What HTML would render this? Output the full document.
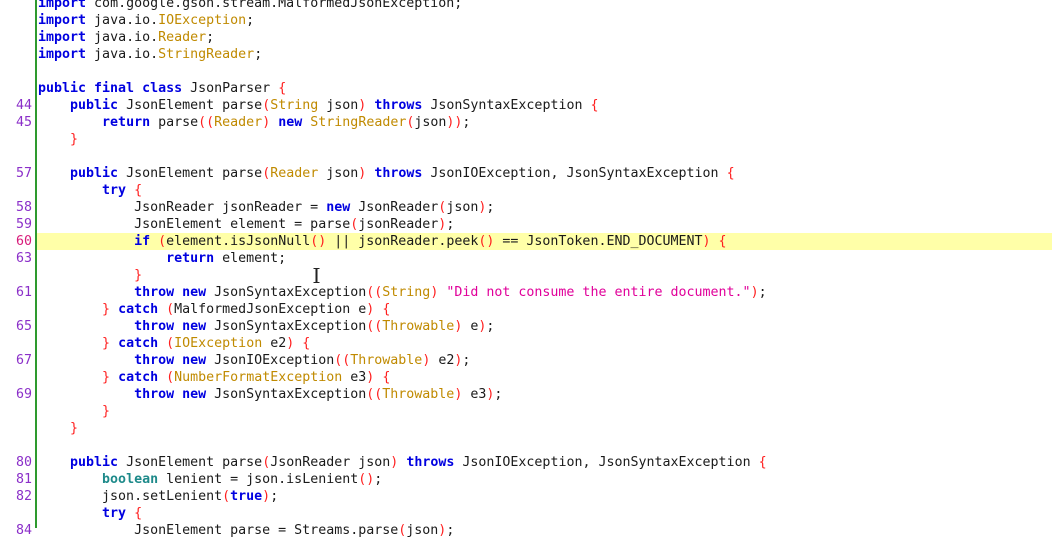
<!DOCTYPE html>
<html><head><style>
body{margin:0;background:#fff;width:1052px;height:528px;overflow:hidden;position:relative;font-family:"DejaVu Sans Mono","Liberation Mono",monospace;font-size:13.3px;color:#1a1a1a}
#g{position:absolute;left:35px;top:0;width:2px;height:528px;background:#2e9a2e;z-index:2}
#c{position:absolute;top:-5px;left:0;right:0}
.l{height:17px;line-height:17px;white-space:pre;position:relative}
.n{position:absolute;left:0;width:32px;text-align:right;color:#8b2fc9}
.t{position:absolute;left:38px}
.h{background:#ffffa8;margin-left:37px}
.h .n{left:-37px;color:#d81b7a}.h .t{left:1px}
b{color:#0000e0}
.q{color:#1e8a8a;font-weight:bold}
i{font-style:normal;color:#ff1e1e}
u{text-decoration:none;color:#c08a00}
s{text-decoration:none;color:#e0009a}
</style></head><body>
<div id="g"></div>
<svg style="position:absolute;left:312px;top:267px" width="9" height="18"><path d="M1.5 1.5h2.5v14h-2.5M7.5 1.5h-2.5v14h2.5" stroke="#222" stroke-width="1" fill="none"/></svg>
<div id="c">
<div class="l"><span class="t"><b>import</b> com.google.gson.stream.MalformedJsonException;</span></div>
<div class="l"><span class="t"><b>import</b> java.io.<u>IOException</u>;</span></div>
<div class="l"><span class="t"><b>import</b> java.io.<u>Reader</u>;</span></div>
<div class="l"><span class="t"><b>import</b> java.io.<u>StringReader</u>;</span></div>
<div class="l"></div>
<div class="l"><span class="t"><b>public final class</b> JsonParser <i>{</i></span></div>
<div class="l"><span class="n">44</span><span class="t">    <b>public</b> JsonElement parse<i>(</i><u>String</u> json<i>)</i> <b>throws</b> JsonSyntaxException <i>{</i></span></div>
<div class="l"><span class="n">45</span><span class="t">        <b>return</b> parse<i>((</i><u>Reader</u><i>)</i> <b>new</b> <u>StringReader</u><i>(</i>json<i>))</i>;</span></div>
<div class="l"><span class="t">    <i>}</i></span></div>
<div class="l"></div>
<div class="l"><span class="n">57</span><span class="t">    <b>public</b> JsonElement parse<i>(</i><u>Reader</u> json<i>)</i> <b>throws</b> JsonIOException, JsonSyntaxException <i>{</i></span></div>
<div class="l"><span class="t">        <b>try</b> <i>{</i></span></div>
<div class="l"><span class="n">58</span><span class="t">            JsonReader jsonReader = <b>new</b> JsonReader<i>(</i>json<i>)</i>;</span></div>
<div class="l"><span class="n">59</span><span class="t">            JsonElement element = parse<i>(</i>jsonReader<i>)</i>;</span></div>
<div class="l h"><span class="n">60</span><span class="t">            <b>if</b> <i>(</i>element.isJsonNull<i>()</i> || jsonReader.peek<i>()</i> == JsonToken.END_DOCUMENT<i>)</i> <i>{</i></span></div>
<div class="l"><span class="n">63</span><span class="t">                <b>return</b> element;</span></div>
<div class="l"><span class="t">            <i>}</i></span></div>
<div class="l"><span class="n">61</span><span class="t">            <b>throw new</b> JsonSyntaxException<i>((</i><u>String</u><i>)</i> <s>"Did not consume the entire document."</s><i>)</i>;</span></div>
<div class="l"><span class="t">        <i>}</i> <b>catch</b> <i>(</i>MalformedJsonException e<i>)</i> <i>{</i></span></div>
<div class="l"><span class="n">65</span><span class="t">            <b>throw new</b> JsonSyntaxException<i>((</i><u>Throwable</u><i>)</i> e<i>)</i>;</span></div>
<div class="l"><span class="t">        <i>}</i> <b>catch</b> <i>(</i><u>IOException</u> e2<i>)</i> <i>{</i></span></div>
<div class="l"><span class="n">67</span><span class="t">            <b>throw new</b> JsonIOException<i>((</i><u>Throwable</u><i>)</i> e2<i>)</i>;</span></div>
<div class="l"><span class="t">        <i>}</i> <b>catch</b> <i>(</i><u>NumberFormatException</u> e3<i>)</i> <i>{</i></span></div>
<div class="l"><span class="n">69</span><span class="t">            <b>throw new</b> JsonSyntaxException<i>((</i><u>Throwable</u><i>)</i> e3<i>)</i>;</span></div>
<div class="l"><span class="t">        <i>}</i></span></div>
<div class="l"><span class="t">    <i>}</i></span></div>
<div class="l"></div>
<div class="l"><span class="n">80</span><span class="t">    <b>public</b> JsonElement parse<i>(</i>JsonReader json<i>)</i> <b>throws</b> JsonIOException, JsonSyntaxException <i>{</i></span></div>
<div class="l"><span class="n">81</span><span class="t">        <span class="q">boolean</span> lenient = json.isLenient<i>()</i>;</span></div>
<div class="l"><span class="n">82</span><span class="t">        json.setLenient<i>(</i><b>true</b><i>)</i>;</span></div>
<div class="l"><span class="t">        <b>try</b> <i>{</i></span></div>
<div class="l"><span class="n">84</span><span class="t">            JsonElement parse = Streams.parse<i>(</i>json<i>)</i>;</span></div>
</div>
</body></html>
